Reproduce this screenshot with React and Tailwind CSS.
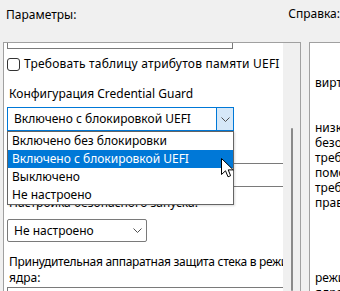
export default function App() {
  const chevron = (
    <svg width="9" height="5" viewBox="0 0 9 5" className="block">
      <path d="M0.5 0.5 L4.5 4.5 L8.5 0.5" fill="none" stroke="#505050" strokeWidth="1" />
    </svg>
  );
  return (
    <div className="relative w-[340px] h-[291px] overflow-hidden bg-[#f0f0f0] font-['Noto_Sans',sans-serif] text-[12px] leading-[16px] text-black">
      <div className="flex h-[42px]">
        <div className="w-[309px] pl-[6px] pt-[7px]">Параметры:</div>
        <div className="pl-[3px] pt-[6px] whitespace-nowrap">Справка:</div>
      </div>
      <div className="flex h-[249px]">
        <div className="ml-[3px] w-[298px] shrink-0 border border-b-0 border-[#a0a0a0] bg-white flex">
          <div className="flex-1 overflow-hidden flex flex-col">
            <div className="ml-[3px] w-[226px] h-[6px] shrink-0 border border-t-0 border-[#7a7a7a]" />
            <div className="mt-[7px] flex items-center h-[16px] shrink-0">
              <div className="ml-[3px] w-[13px] h-[13px] rounded-[3px] border border-[#333] bg-white" />
              <span className="ml-[4px] whitespace-nowrap tracking-[0.2px]">Требовать таблицу атрибутов памяти UEFI</span>
            </div>
            <div className="mt-[14px] ml-[5px] whitespace-nowrap shrink-0">Конфигурация Credential Guard</div>
            <div className="mt-[5px] ml-[3px] w-[227px] h-[24px] shrink-0 border border-[#0078d7] flex items-stretch">
              <div className="flex-1 pl-[6px] flex items-center whitespace-nowrap">Включено с блокировкой UEFI</div>
              <div className="w-[17px] bg-[#d6e8f8] border-l border-[#0078d7] flex items-center justify-center">{chevron}</div>
            </div>
            <div className="mt-[32px] ml-[3px] w-[300px] h-[24px] shrink-0 border border-[#7a7a7a]" />
            <div className="mt-[8px] ml-[5px] whitespace-nowrap shrink-0">Настройка безопасного запуска:</div>
            <div className="mt-[8px] ml-[3px] w-[140px] h-[23px] shrink-0 rounded-[2px] border border-[#7a7a7a] flex items-center justify-between pl-[6px] pr-[4px]">
              <span className="whitespace-nowrap">Не настроено</span>
              {chevron}
            </div>
            <div className="mt-[12px] ml-[5px] shrink-0 leading-[16px]">
              <div className="whitespace-nowrap tracking-[-0.3px]">Принудительная аппаратная защита стека в режиме</div>
              <div>ядра:</div>
            </div>
            <div className="mt-[1px] ml-[3px] w-[300px] h-[24px] shrink-0 border border-[#7a7a7a]" />
          </div>
          <div className="w-[17px] shrink-0 bg-[#f0f0f0] flex justify-center pt-[85px]">
            <div className="w-[2px] h-full bg-[#8a8a8a] rounded-full" />
          </div>
        </div>
        <div className="ml-[8px] flex-1 border border-r-0 border-b-0 border-[#a0a0a0] bg-white pl-[5px] pt-[32px] leading-[15px] whitespace-nowrap">
          <div>виртуализации</div>
          <div>&nbsp;</div>
          <div>&nbsp;</div>
          <div>низкий</div>
          <div>безопасности</div>
          <div>требует</div>
          <div>помощью</div>
          <div>требует</div>
          <div>правило</div>
          <div>&nbsp;</div>
          <div>&nbsp;</div>
          <div>&nbsp;</div>
          <div>&nbsp;</div>
          <div>режиме</div>
          <div>ядра</div>
        </div>
      </div>

      <div className="absolute left-[7px] top-[131px] w-[227px] h-[74px] border border-[#646464] bg-white shadow-[1px_1px_2px_rgba(0,0,0,0.15)] flex flex-col">
        <div className="h-[18px] pl-[4px] flex items-center whitespace-nowrap">Включено без блокировки</div>
        <div className="h-[18px] pl-[4px] flex items-center whitespace-nowrap bg-[#0078d7] text-white">Включено с блокировкой UEFI</div>
        <div className="h-[18px] pl-[4px] flex items-center whitespace-nowrap">Выключено</div>
        <div className="h-[18px] pl-[4px] flex items-center whitespace-nowrap">Не настроено</div>
      </div>

      <svg className="absolute left-[221px] top-[158px]" width="13" height="20" viewBox="0 0 13 20">
        <path d="M0.5 0.5 L0.5 16.5 L4.5 12.8 L7 18.8 L9.6 17.7 L7.2 11.9 L12.3 11.9 Z" fill="white" stroke="black" strokeWidth="1" strokeLinejoin="miter" />
      </svg>
    </div>
  );
}
